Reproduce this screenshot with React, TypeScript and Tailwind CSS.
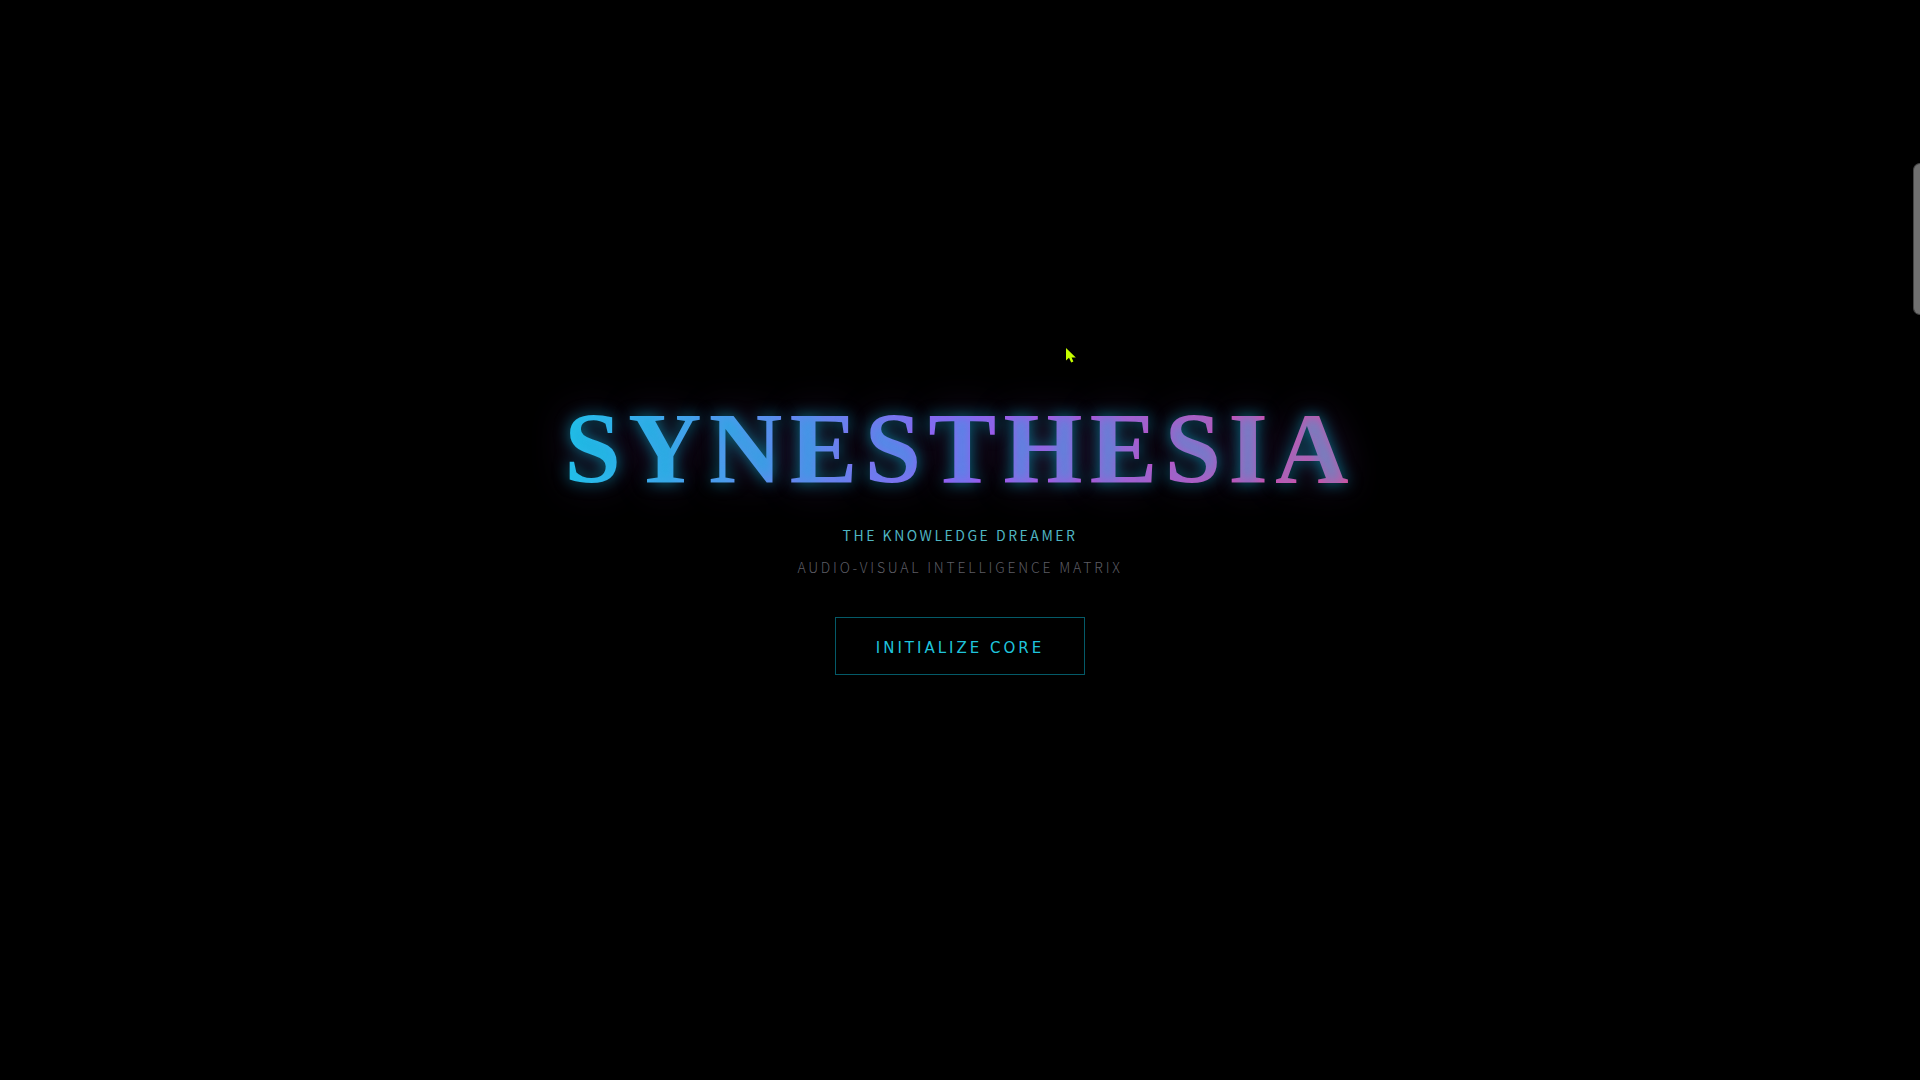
export default function App() {
    return (
        <main className="relative flex min-h-screen flex-col items-center justify-center overflow-hidden bg-black">
            <h1 className="bg-linear-to-r/srgb from-[#22c8ee] via-[#a855f7] to-[#ec4899] bg-clip-text font-['Liberation_Serif',serif] text-[102px] leading-22 font-bold tracking-[7px] text-transparent [text-shadow:0_0_15px_rgba(6,182,212,0.6),0_0_40px_rgba(168,85,247,0.3)]">
                SYNESTHESIA
            </h1>
            <div className="mt-[30px] flex flex-col items-center gap-2 font-['Noto_Sans_CJK_SC',sans-serif] text-sm leading-6">
                <p className="font-normal tracking-[0.18em] text-[#4fb5c2]">THE KNOWLEDGE DREAMER</p>
                <p className="font-light tracking-[0.2em] text-[#5c5c64]">AUDIO-VISUAL INTELLIGENCE MATRIX</p>
            </div>
            <button
                type="button"
                className="mt-[38px] border border-[#045a68] px-10 pt-5 pb-4 font-['DejaVu_Sans',sans-serif] text-[15px] leading-5 font-normal tracking-[0.2em] text-[#1fc4dc] hover:bg-cyan-950"
            >
                INITIALIZE CORE
            </button>

            {/* drawer handle on the right edge */}
            <div className="absolute top-[163px] right-0 h-38 w-[7px] rounded-l-lg border border-r-0 border-[#444] bg-[#707070]"></div>

            {/* custom cursor */}
            <svg className="absolute top-[347px] left-[1065px] h-4 w-3" viewBox="0 0 12 16" fill="#c6ff00" aria-hidden="true">
                <path d="M1 1V13.5L4 10.8L6.2 15.5L8.4 14.5L6.6 10.5H10.8Z" />
            </svg>
        </main>
    );
}
